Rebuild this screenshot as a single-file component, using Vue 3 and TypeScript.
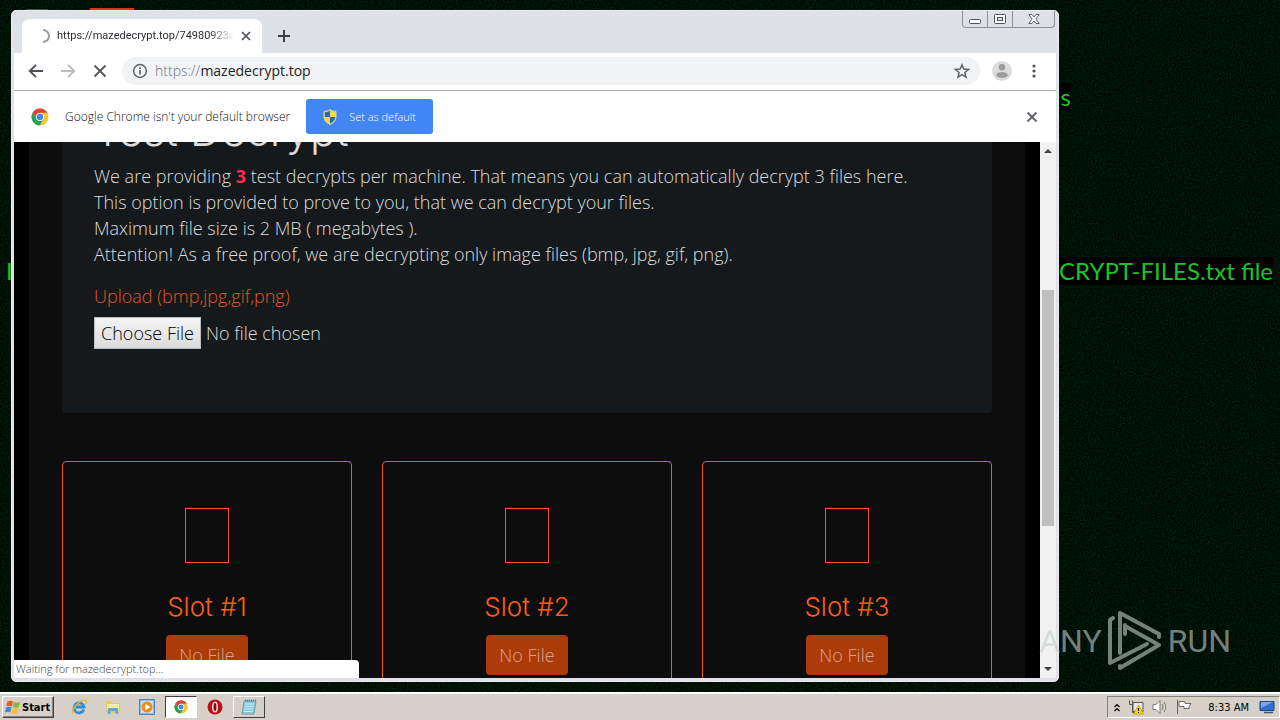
<script setup lang="ts">
import { ref } from 'vue'

interface Slot {
  id: number
  label: string
}

const url = ref('mazedecrypt.top')
const slots: Slot[] = [
  { id: 1, label: 'No File' },
  { id: 2, label: 'No File' },
  { id: 3, label: 'No File' },
]
</script>

<template>
  <div class="screen">
    <main class="desktop">
      <svg class="noise" aria-hidden="true">
        <filter id="grain" color-interpolation-filters="sRGB">
          <feTurbulence type="fractalNoise" baseFrequency="0.6" numOctaves="2" seed="4" />
          <feColorMatrix values="0 0 0 0 0  0.2 0 0 0 -0.03  0.12 0 0 0 -0.03  0 0 0 0 1" />
        </filter>
        <rect width="100%" height="100%" filter="url(#grain)" />
      </svg>
      <span class="shortcut-grey"></span>
      <span class="shortcut-red"></span>
      <p class="wall wall-top">s</p>
      <p class="wall wall-mid">CRYPT-FILES.txt file</p>
      <p class="wall wall-left">I</p>

      <section class="window">
        <header class="titlebar">
          <div class="tab">
            <svg class="spinner" viewBox="0 0 16 16"><path d="M8 2a6 6 0 0 1 0 12" fill="none" stroke="#9a9da1" stroke-width="2" /></svg>
            <span class="tab-title">https://mazedecrypt.top/74980923c</span>
            <button class="icon-btn tab-close" aria-label="Close tab">
              <svg viewBox="0 0 10 10" width="10" height="10"><path d="M1 1l8 8M9 1l-8 8" stroke="#4d5156" stroke-width="1.7" /></svg>
            </button>
          </div>
          <button class="icon-btn new-tab" aria-label="New tab">
            <svg viewBox="0 0 12 12" width="12" height="12"><path d="M6 0v12M0 6h12" stroke="#3c4043" stroke-width="2" /></svg>
          </button>
          <div class="controls">
            <button class="ctl" aria-label="Minimize">
              <svg viewBox="0 0 12 12" width="12" height="12"><rect x=".5" y="6.5" width="11" height="4" rx="1" fill="#fff" stroke="#50535c" /></svg>
            </button>
            <button class="ctl" aria-label="Restore">
              <svg viewBox="0 0 12 12" width="12" height="12"><rect x=".5" y="1.5" width="11" height="9" rx="1" fill="#fff" stroke="#50535c" /><rect x="3.5" y="4.5" width="5" height="3" fill="#dee1e6" stroke="#50535c" /></svg>
            </button>
            <button class="ctl ctl-close" aria-label="Close">
              <svg viewBox="0 0 12 12" width="12" height="12"><path d="M.8 1.5h3.2L6 4l2-2.500h3.200L7.800 6l3.400 4.500H8L6 8l-2 2.500H.8L4.200 6z" fill="#fff" stroke="#50535c" stroke-width=".9" /></svg>
            </button>
          </div>
        </header>

        <div class="chrome">
          <nav class="toolbar">
            <button class="icon-btn" aria-label="Back">
              <svg viewBox="0 0 16 16" width="16" height="16"><path d="M15 8H2M8 1.800L1.800 8 8 14.200" fill="none" stroke="#505357" stroke-width="1.900" /></svg>
            </button>
            <button class="icon-btn" aria-label="Forward">
              <svg viewBox="0 0 16 16" width="16" height="16"><path d="M1 8h13M8 1.800L14.200 8 8 14.200" fill="none" stroke="#b9bbbe" stroke-width="1.900" /></svg>
            </button>
            <button class="icon-btn" aria-label="Stop">
              <svg viewBox="0 0 16 16" width="16" height="16"><path d="M2.500 2.500l11 11M13.500 2.500l-11 11" stroke="#55585c" stroke-width="1.900" /></svg>
            </button>
            <div class="omnibox">
              <svg viewBox="0 0 16 16" width="16" height="16"><circle cx="8" cy="8" r="6.400" fill="none" stroke="#5f6368" stroke-width="1.500" /><path d="M8 7v4.500M8 4.200v1.700" stroke="#5f6368" stroke-width="1.700" /></svg>
              <label class="scheme" for="address">https://</label>
              <input id="address" v-model="url" class="address" type="text" spellcheck="false" />
              <button class="icon-btn" aria-label="Bookmark">
                <svg viewBox="0 0 16 16" width="16" height="16"><path d="M8 1.800l1.800 4.300 4.700.4-3.600 3 1.100 4.600L8 11.700l-4 2.400 1.100-4.600-3.600-3 4.700-.4z" fill="none" stroke="#5f6368" stroke-width="1.500" /></svg>
              </button>
            </div>
            <button class="icon-btn avatar" aria-label="Profile">
              <svg viewBox="0 0 20 20" width="20" height="20"><circle cx="10" cy="10" r="10" fill="#dcdcdc" /><circle cx="10" cy="6.300" r="3.200" fill="#9c9c9c" /><ellipse cx="10" cy="14" rx="5.800" ry="3" fill="#9c9c9c" /></svg>
            </button>
            <button class="icon-btn" aria-label="Menu">
              <svg viewBox="0 0 16 16" width="16" height="16" fill="#505357"><circle cx="8" cy="3" r="1.600" /><circle cx="8" cy="8" r="1.600" /><circle cx="8" cy="13" r="1.600" /></svg>
            </button>
          </nav>

          <div class="infobar">
            <svg class="chrome-logo" viewBox="0 0 18 18" width="18" height="18">
              <circle cx="9" cy="9" r="8.500" fill="#f7c52d" />
              <path d="M1.600 4.800A8.500 8.500 0 0 1 16.400 4.800H9L5.600 11z" fill="#db4437" />
              <path d="M1.600 4.800A8.500 8.500 0 0 0 8.600 17.500L12.400 11 5.600 11z" fill="#1ea362" />
              <circle cx="9" cy="9" r="4.100" fill="#fff" /><circle cx="9" cy="9" r="3.200" fill="#4285f4" />
            </svg>
            <span class="info-text">Google Chrome isn't your default browser</span>
            <button class="default-btn">
              <svg viewBox="0 0 14 16" width="14" height="16">
                <path d="M7 .5C5 2 3 2.300 1 2.300V8c0 4 3 6 6 7.500C10 14 13 12 13 8V2.300C11 2.300 9 2 7 .5z" fill="#f6d743" />
                <path d="M7 1.500V8H1.700V3C4 3 5.500 2.500 7 1.500zM7 8h5.300c0 3-2 5-5.300 6.700z" fill="#2b6aa8" />
                <path d="M7 .5C5 2 3 2.300 1 2.300V8c0 4 3 6 6 7.500C10 14 13 12 13 8V2.300C11 2.300 9 2 7 .5z" fill="none" stroke="#d8d3b0" />
              </svg>
              <span>Set as default</span>
            </button>
            <button class="icon-btn info-close" aria-label="Dismiss">
              <svg viewBox="0 0 12 12" width="12" height="12"><path d="M1.500 1.500l9 9M10.500 1.500l-9 9" stroke="#606367" stroke-width="1.900" /></svg>
            </button>
          </div>

          <div class="viewport">
            <div class="page">
              <div class="container">
                <article class="card">
                  <h1>Test Decrypt</h1>
                  <p>
                    We are providing <strong>3</strong> test decrypts per machine. That means you can automatically decrypt 3 files here.<br />
                    This option is provided to prove to you, that we can decrypt your files.<br />
                    Maximum file size is 2 MB ( megabytes ).<br />
                    Attention! As a free proof, we are decrypting only image files (bmp, jpg, gif, png).
                  </p>
                  <label class="upload-label" for="upload">Upload (bmp,jpg,gif,png)</label>
                  <input id="upload" class="upload" type="file" accept=".bmp,.jpg,.gif,.png" />
                </article>
                <div class="slots">
                  <article v-for="slot in slots" :key="slot.id" class="slot">
                    <span class="glyph"></span>
                    <h2>Slot #{{ slot.id }}</h2>
                    <button class="slot-btn">{{ slot.label }}</button>
                  </article>
                </div>
              </div>
            </div>
            <div class="scrollbar">
              <svg viewBox="0 0 8 4" width="8" height="4"><path d="M0 4l4-4 4 4z" fill="#404040" /></svg>
              <span class="track"><span class="thumb"></span></span>
              <svg viewBox="0 0 8 4" width="8" height="4"><path d="M0 0l4 4 4-4z" fill="#404040" /></svg>
            </div>
            <div class="status">Waiting for mazedecrypt.top...</div>
          </div>
        </div>
      </section>

      <div class="watermark">
        <span>ANY</span>
        <svg viewBox="0 0 54 62" width="54" height="62" fill="none" stroke="currentColor" stroke-width="4" stroke-linejoin="round" stroke-linecap="round">
          <path d="M12 43V3L51 24v3" />
          <path d="M5 8L2 10v43L39 34" />
          <path d="M17 15v9M17 16l34 19L12 58v-2" />
        </svg>
        <span>RUN</span>
      </div>
    </main>

    <footer class="taskbar">
      <button class="start">
        <svg viewBox="0 0 16 16" width="16" height="16">
          <path d="M2.500 2.500Q5 .8 8 2.500L6.800 7.500Q4 6 1.200 7.500z" fill="#e8562a" />
          <path d="M8.800 2.800Q12 4.500 15 2.800L13.800 8Q11 9.500 7.700 7.800z" fill="#84b83c" />
          <path d="M1 8.500Q4 7 6.500 8.500L5.300 13.500Q3 12 0 13.500z" fill="#3f86d6" />
          <path d="M7.400 8.900Q11 10.500 13.500 9L12.300 14Q9 15.500 6.200 13.900z" fill="#f5c02c" />
        </svg>
        <span>Start</span>
      </button>
      <div class="quick">
        <button class="task" aria-label="Internet Explorer">
          <svg viewBox="0 0 16 16" width="16" height="16"><path d="M12.800 10.500A5 5 0 1 1 13 8H5" fill="none" stroke="#2d8fd8" stroke-width="2.800" /><path d="M2 14.500C-1 11 10-1 15 1.500c1 .8.500 2-.5 3.500" fill="none" stroke="#e8b92c" stroke-width="1.200" /></svg>
        </button>
        <button class="task" aria-label="Explorer">
          <svg viewBox="0 0 16 16" width="16" height="16"><path d="M1 2h5l1 2h8v10H1z" fill="#e8c95c" /><path d="M2 5h12v6H2z" fill="#f8eba6" /><path d="M3 15V9h10v6h-2.500v-3h-5v3z" fill="#58a7dc" /></svg>
        </button>
        <button class="task" aria-label="Media Player">
          <svg viewBox="0 0 16 16" width="16" height="16"><rect x=".5" y=".5" width="15" height="15" fill="#86b9e6" stroke="#4d84bd" /><rect x="2" y="2" width="12" height="12" fill="#c9e1f6" /><circle cx="8" cy="8" r="5.500" fill="#f08c1b" /><path d="M6.300 4.800l5 3.200-5 3.200z" fill="#fff" /></svg>
        </button>
        <button class="task pressed" aria-label="Chrome">
          <svg viewBox="0 0 18 18" width="14" height="14">
            <circle cx="9" cy="9" r="8.500" fill="#f7c52d" />
            <path d="M1.600 4.800A8.500 8.500 0 0 1 16.400 4.800H9L5.600 11z" fill="#db4437" />
            <path d="M1.600 4.800A8.500 8.500 0 0 0 8.600 17.500L12.400 11 5.600 11z" fill="#1ea362" />
            <circle cx="9" cy="9" r="4.100" fill="#fff" /><circle cx="9" cy="9" r="3.200" fill="#4285f4" />
          </svg>
        </button>
        <button class="task" aria-label="Opera">
          <svg viewBox="0 0 16 16" width="16" height="16"><circle cx="8" cy="8" r="7.500" fill="#b5121b" /><ellipse cx="8" cy="8" rx="2.200" ry="4.800" fill="#7d0a10" stroke="#f0d5d5" stroke-width="1.600" /></svg>
        </button>
        <button class="task raised" aria-label="Notepad">
          <svg viewBox="0 0 16 16" width="16" height="16"><path d="M3 2h12l-2 13H1z" fill="#8dcbdc" stroke="#6a9fae" /><path d="M4 5h9M4 7.500h8.500M3.500 10h8.500M3 12.500h8.500" stroke="#c8ecf4" /><path d="M4 1.500h11" stroke="#667" stroke-width="1.500" stroke-dasharray="1 1" /></svg>
        </button>
      </div>
      <div class="tray">
        <svg viewBox="0 0 6 9" width="6" height="9"><path d="M.5 4L3 1.500 5.500 4M.5 8L3 5.500 5.500 8" fill="none" stroke="#000" stroke-width="1.200" /></svg>
        <svg viewBox="0 0 16 16" width="16" height="16"><path d="M5 3.500h10v9H5z" fill="#e8e8e8" stroke="#555" /><path d="M1.500 1.500v4h3v8h2M4.500 1.500v4" fill="none" stroke="#555" /><path d="M10.500 6l5 9h-10z" fill="#fcd80c" stroke="#b39500" stroke-width=".7" /><path d="M10.500 9v3M10.500 13v1" stroke="#000" stroke-width="1.200" /></svg>
        <svg viewBox="0 0 16 16" width="16" height="16"><path d="M1 5.500h3l4-4v13l-4-4H1z" fill="#fff" stroke="#777" /><path d="M10 5q2 3 0 6M12 3q3.500 5 0 10" fill="none" stroke="#777" /></svg>
        <svg viewBox="0 0 16 16" width="16" height="16"><path d="M1.500 1v14M3 2.500h6v2h6l-2 3 0 2H8v-2H3z" fill="#fff" stroke="#666" /></svg>
        <time>8:33 AM</time>
        <svg viewBox="0 0 16 16" width="16" height="16"><path d="M1 2.500h14v9H1z" fill="#2f6fce" stroke="#1f4688" /><path d="M2 3h12L2 9z" fill="#77a9ea" /><path d="M5 13.500h9" stroke="#456" stroke-width="1.500" /></svg>
      </div>
    </footer>
  </div>
</template>

<style>
body {
  margin: 0;
}
</style>

<style scoped>
.screen {
  display: flex;
  flex-direction: column;
  height: 100vh;
  overflow: hidden;
  background: #00110a;
  font-family: "Open Sans", "Noto Sans", sans-serif;
}
button {
  margin: 0;
  padding: 0;
  border: 0;
  background: none;
  font-family: inherit;
}
svg {
  display: block;
  flex: none;
}
.desktop {
  position: relative;
  display: flex;
  flex: 1;
  min-height: 0;
  padding: 10px 221px 10px 11px;
}
.noise {
  position: absolute;
  inset: 0;
  width: 100%;
  height: 100%;
}
.shortcut-grey,
.shortcut-red {
  position: absolute;
  top: 8px;
  left: 90px;
  width: 44px;
  height: 4px;
  background: #e03010;
}
.shortcut-grey {
  left: 26px;
  width: 22px;
  top: 9px;
  background: #444a48;
}
.wall {
  position: absolute;
  margin: 0;
  background: #000;
  color: #19c524;
  font-size: 24px;
  line-height: 28px;
  white-space: nowrap;
  font-family: Lato, sans-serif;
}
.wall-top {
  top: 83px;
  right: 209px;
}
.wall-mid {
  top: 257px;
  right: 7px;
}
.wall-left {
  top: 257px;
  left: 6px;
  background: none;
}
.window {
  position: relative;
  display: flex;
  flex: 1;
  flex-direction: column;
  min-width: 0;
  box-sizing: border-box;
  border: 1px solid #eceef1;
  border-radius: 5px;
  background: #dee1e6;
}
.titlebar {
  display: flex;
  align-items: flex-start;
  height: 42px;
}
.tab {
  display: flex;
  align-items: center;
  gap: 6px;
  box-sizing: border-box;
  width: 240px;
  height: 34px;
  margin: 8px 0 0 10px;
  padding: 0 10px 0 13px;
  border-radius: 8px 8px 0 0;
  background: #fff;
}
.spinner {
  width: 16px;
  height: 16px;
}
.tab-title {
  flex: 1;
  overflow: hidden;
  color: #2a2c30;
  font-family: Roboto, sans-serif;
  font-size: 11px;
  line-height: 16px;
  white-space: nowrap;
  mask-image: linear-gradient(90deg, #000 86%, transparent);
}
.icon-btn {
  display: flex;
  align-items: center;
  justify-content: center;
}
.tab-close {
  width: 12px;
  height: 16px;
}
.new-tab {
  width: 24px;
  height: 24px;
  margin: 13px 0 0 10px;
}
.controls {
  display: flex;
  margin: 0 3px 0 auto;
  border: 1px solid #8d919b;
  border-top: 0;
  border-radius: 0 0 4px 4px;
}
.ctl {
  display: flex;
  align-items: center;
  justify-content: center;
  width: 25px;
  height: 16px;
  border-right: 1px solid #8d919b;
}
.ctl-close {
  width: 41px;
  border-right: 0;
}
.chrome {
  display: flex;
  flex: 1;
  flex-direction: column;
  min-height: 0;
  margin: 0 2px 3px;
  background: #fff;
}
.toolbar {
  display: flex;
  align-items: center;
  gap: 16px;
  box-sizing: border-box;
  height: 38px;
  padding: 0 14px 2px;
  border-bottom: 1px solid #a9abae;
}
.omnibox {
  display: flex;
  flex: 1;
  align-items: center;
  height: 28px;
  margin-left: -2px;
  padding: 0 10px;
  border-radius: 14px;
  background: #f1f3f4;
  font-size: 14px;
}
.scheme {
  margin-left: 7px;
  color: #70757a;
  font-weight: 300;
}
.address {
  flex: 1;
  min-width: 0;
  padding: 0;
  border: 0;
  outline: 0;
  background: none;
  color: #202124;
  font: inherit;
}
.avatar {
  margin: 0 -2px 0 -4px;
}
.infobar {
  display: flex;
  align-items: center;
  height: 51px;
  padding: 0 18px 0 17px;
}
.info-text {
  margin: 0 16px;
  color: #111;
  font-size: 12px;
  font-weight: 300;
}
.default-btn {
  display: flex;
  align-items: center;
  gap: 12px;
  height: 35px;
  padding: 0 17px;
  border-radius: 3px;
  background: #4285f4;
  color: #fff;
  font-size: 11px;
  font-weight: 300;
}
.info-close {
  margin-left: auto;
}
.viewport {
  position: relative;
  display: flex;
  flex: 1;
  min-height: 0;
  overflow: hidden;
  background: #000;
}
.page {
  flex: 1;
  height: 0;
  margin-top: -40px;
}
.container {
  margin: 0 15px;
  padding: 0 33px 32px;
  background: #0d0d0d;
}
.card {
  box-sizing: border-box;
  height: 311px;
  padding: 0 32px;
  border-radius: 4px;
  background: #16191c;
  color: #dcdddd;
  font-size: 18px;
  font-weight: 300;
  line-height: 26px;
}
.card h1 {
  margin: 0 0 5px;
  font-family: Inter, sans-serif;
  font-size: 43px;
  font-weight: 300;
  line-height: 56px;
}
.card p {
  margin: 0 0 16px;
  white-space: nowrap;
}
.card strong {
  color: #ff2d55;
  font-weight: 700;
}
.upload-label {
  display: block;
  color: #e2561f;
}
.upload {
  display: block;
  width: 100%;
  margin-top: 8px;
  color: #dcdddd;
  font: inherit;
}
.upload::file-selector-button {
  box-sizing: border-box;
  width: 107px;
  height: 32px;
  margin: 0 5px 0 0;
  padding: 0;
  border: 1px solid #bbb;
  background: linear-gradient(#f4f4f4, #dcdcdc);
  color: #000;
  font: inherit;
}
.slots {
  display: grid;
  grid-template-columns: repeat(3, 1fr);
  gap: 30px;
  margin-top: 48px;
}
.slot {
  display: flex;
  flex-direction: column;
  align-items: center;
  height: 240px;
  border: 1px solid #ee5a24;
  border-radius: 4px;
}
.glyph {
  width: 42px;
  height: 53px;
  margin-top: 46px;
  border: 1px solid #ee5a24;
}
.slot h2 {
  margin: 28px 0 12px;
  color: #ff5c1c;
  font-family: Inter, sans-serif;
  font-size: 26px;
  font-weight: 300;
  line-height: 32px;
}
.slot-btn {
  width: 82px;
  height: 40px;
  border-radius: 4px;
  background: #ab3b09;
  color: #dba48c;
  font-size: 18px;
  font-weight: 300;
}
.scrollbar {
  display: flex;
  flex-direction: column;
  align-items: center;
  box-sizing: border-box;
  width: 16px;
  padding: 7px 0;
  background: #f1f1f1;
}
.track {
  display: flex;
  flex: 1;
  flex-direction: column;
  align-items: center;
  width: 100%;
}
.track::before {
  content: "";
  flex: 137;
}
.track::after {
  content: "";
  flex: 141;
}
.thumb {
  flex: 236;
  width: 12px;
  background: #c1c1c1;
}
.status {
  position: absolute;
  bottom: 0;
  left: -2px;
  box-sizing: border-box;
  width: 347px;
  height: 18px;
  padding: 0 4px;
  border-radius: 0 4px 0 0;
  background: #fff;
  color: #3c4043;
  font-size: 11px;
  font-weight: 300;
  line-height: 18px;
}
.watermark {
  position: absolute;
  right: 49px;
  bottom: 20px;
  display: flex;
  align-items: center;
  gap: 6px;
  color: rgba(195, 205, 200, 0.6);
  font-family: Roboto, sans-serif;
  font-size: 32px;
  line-height: 62px;
}
.taskbar {
  display: flex;
  align-items: center;
  box-sizing: border-box;
  height: 28px;
  padding: 0 0 0 2px;
  border-top: 2px solid #fff;
  background: #d6d0c8;
  font-family: "DejaVu Sans Condensed", sans-serif;
}
.start {
  display: flex;
  align-items: center;
  gap: 1px;
  box-sizing: border-box;
  width: 52px;
  height: 22px;
  padding: 0 2px;
  border: 1px solid;
  border-color: #fff #404040 #404040 #fff;
  box-shadow: inset -1px -1px #87837c;
  color: #000;
  font-size: 11px;
  font-weight: 700;
}
.quick {
  display: flex;
  align-items: center;
  gap: 2px;
  margin-left: 9px;
}
.task {
  display: flex;
  align-items: center;
  justify-content: center;
  box-sizing: border-box;
  width: 32px;
  height: 22px;
}
.pressed {
  border: 1px solid;
  border-color: #404040 #fff #fff #404040;
  background: #fff;
}
.raised {
  border: 1px solid;
  border-color: #fff #404040 #404040 #fff;
}
.tray {
  display: flex;
  align-items: center;
  gap: 8px;
  box-sizing: border-box;
  height: 22px;
  margin-left: auto;
  padding: 0 4px 0 6px;
  border: 1px solid;
  border-color: #808080 #fff #fff #808080;
}
.tray time {
  margin: 0 2px 0 8px;
  color: #000;
  font-size: 11px;
}
</style>
